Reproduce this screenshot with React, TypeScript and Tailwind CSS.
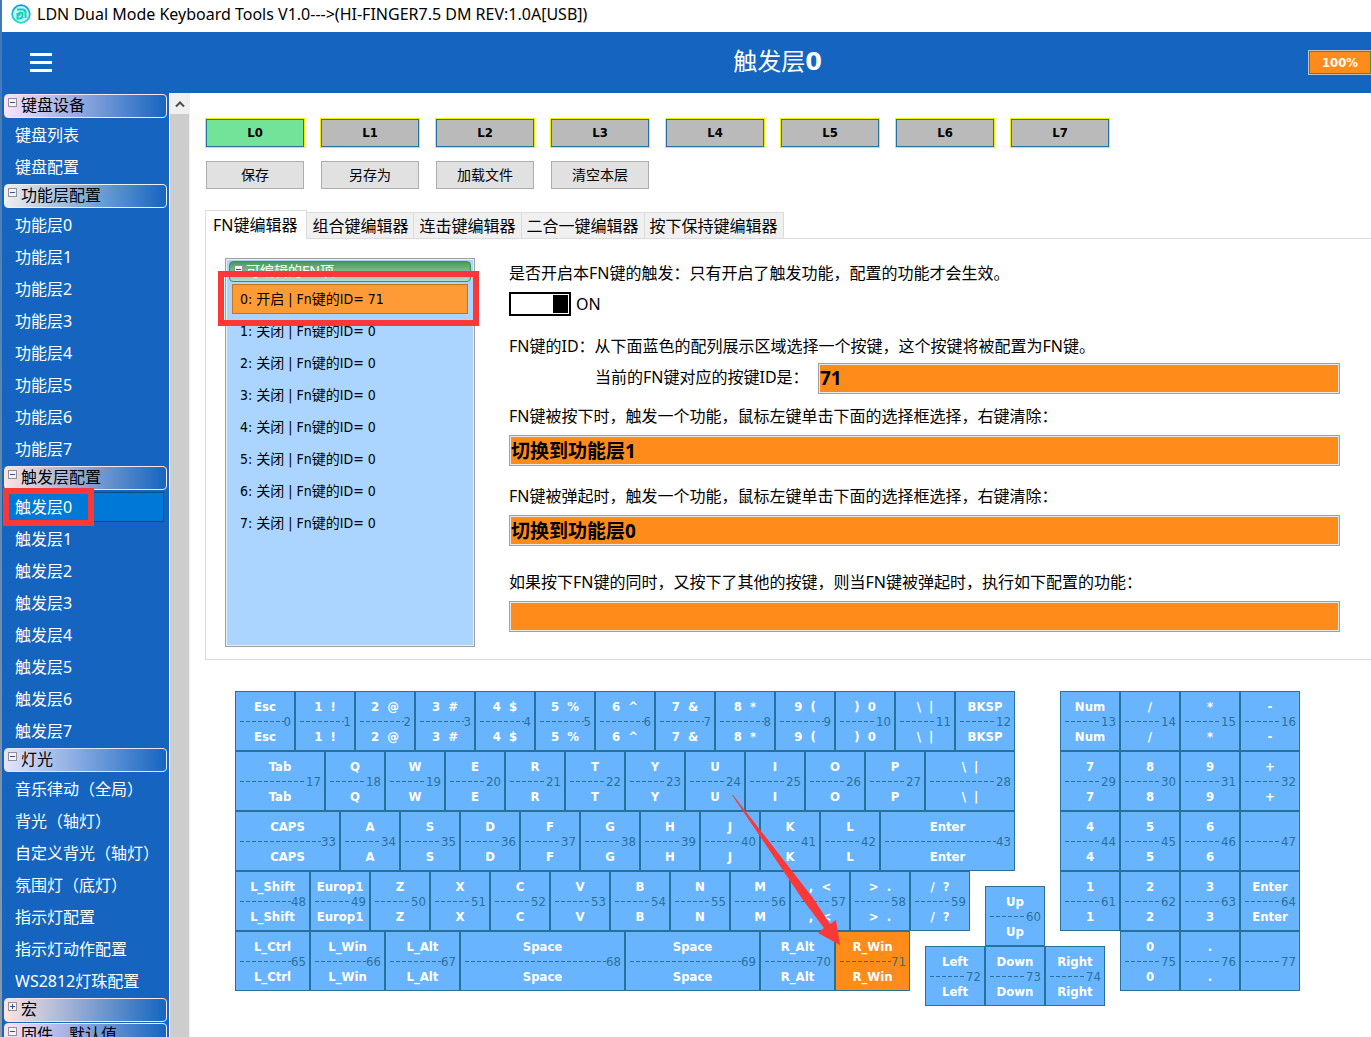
import React, { useState } from 'react';
import { clsx } from 'clsx';

type MenuGroup = {
    title: string;
    tint: string;
    open: boolean;
    items: string[];
};

const menu: MenuGroup[] = [
    {
        title: '键盘设备',
        tint: 'from-[#fde2fb] border-[#fde2fb]',
        open: true,
        items: ['键盘列表', '键盘配置'],
    },
    {
        title: '功能层配置',
        tint: 'from-[#f0f0f0] border-[#f0f0f0]',
        open: true,
        items: ['功能层0', '功能层1', '功能层2', '功能层3', '功能层4', '功能层5', '功能层6', '功能层7'],
    },
    {
        title: '触发层配置',
        tint: 'from-[#fde4e2] border-[#fde4e2]',
        open: true,
        items: ['触发层0', '触发层1', '触发层2', '触发层3', '触发层4', '触发层5', '触发层6', '触发层7'],
    },
    {
        title: '灯光',
        tint: 'from-[#e4e4fd] border-[#e4e4fd]',
        open: true,
        items: [
            '音乐律动（全局）',
            '背光（轴灯）',
            '自定义背光（轴灯）',
            '氛围灯（底灯）',
            '指示灯配置',
            '指示灯动作配置',
            'WS2812灯珠配置',
        ],
    },
    { title: '宏', tint: 'from-[#fde4e2] border-[#fde4e2]', open: false, items: [] },
    { title: '固件、默认值', tint: 'from-[#fde2fb] border-[#fde2fb]', open: true, items: [] },
];

const layers = ['L0', 'L1', 'L2', 'L3', 'L4', 'L5', 'L6', 'L7'];
const actions = ['保存', '另存为', '加载文件', '清空本层'];
const tabs = ['FN键编辑器', '组合键编辑器', '连击键编辑器', '二合一键编辑器', '按下保持键编辑器'];
const fnItems = [71, 0, 0, 0, 0, 0, 0, 0];

// [label, id, width], width in quarter keys
type KeyDef = [string, number, number];
type KeyRow = { x: number; y: number; keys: KeyDef[] };

const keyRows: KeyRow[] = [
    {
        x: 0,
        y: 0,
        keys: [
            ['Esc', 0, 4],
            ['1  !', 1, 4],
            ['2  @', 2, 4],
            ['3  #', 3, 4],
            ['4  $', 4, 4],
            ['5  %', 5, 4],
            ['6  ^', 6, 4],
            ['7  &', 7, 4],
            ['8  *', 8, 4],
            ['9  (', 9, 4],
            [')  0', 10, 4],
            ['\\  |', 11, 4],
            ['BKSP', 12, 4],
        ],
    },
    {
        x: 0,
        y: 4,
        keys: [
            ['Tab', 17, 6],
            ['Q', 18, 4],
            ['W', 19, 4],
            ['E', 20, 4],
            ['R', 21, 4],
            ['T', 22, 4],
            ['Y', 23, 4],
            ['U', 24, 4],
            ['I', 25, 4],
            ['O', 26, 4],
            ['P', 27, 4],
            ['\\  |', 28, 6],
        ],
    },
    {
        x: 0,
        y: 8,
        keys: [
            ['CAPS', 33, 7],
            ['A', 34, 4],
            ['S', 35, 4],
            ['D', 36, 4],
            ['F', 37, 4],
            ['G', 38, 4],
            ['H', 39, 4],
            ['J', 40, 4],
            ['K', 41, 4],
            ['L', 42, 4],
            ['Enter', 43, 9],
        ],
    },
    {
        x: 0,
        y: 12,
        keys: [
            ['L_Shift', 48, 5],
            ['Europ1', 49, 4],
            ['Z', 50, 4],
            ['X', 51, 4],
            ['C', 52, 4],
            ['V', 53, 4],
            ['B', 54, 4],
            ['N', 55, 4],
            ['M', 56, 4],
            [',  <', 57, 4],
            ['>  .', 58, 4],
            ['/  ?', 59, 4],
        ],
    },
    {
        x: 0,
        y: 16,
        keys: [
            ['L_Ctrl', 65, 5],
            ['L_Win', 66, 5],
            ['L_Alt', 67, 5],
            ['Space', 68, 11],
            ['Space', 69, 9],
            ['R_Alt', 70, 5],
            ['R_Win', 71, 5],
        ],
    },
    { x: 50, y: 13, keys: [['Up', 60, 4]] },
    {
        x: 46,
        y: 17,
        keys: [
            ['Left', 72, 4],
            ['Down', 73, 4],
            ['Right', 74, 4],
        ],
    },
    {
        x: 55,
        y: 0,
        keys: [
            ['Num', 13, 4],
            ['/', 14, 4],
            ['*', 15, 4],
            ['-', 16, 4],
        ],
    },
    {
        x: 55,
        y: 4,
        keys: [
            ['7', 29, 4],
            ['8', 30, 4],
            ['9', 31, 4],
            ['+', 32, 4],
        ],
    },
    {
        x: 55,
        y: 8,
        keys: [
            ['4', 44, 4],
            ['5', 45, 4],
            ['6', 46, 4],
            ['', 47, 4],
        ],
    },
    {
        x: 55,
        y: 12,
        keys: [
            ['1', 61, 4],
            ['2', 62, 4],
            ['3', 63, 4],
            ['Enter', 64, 4],
        ],
    },
    {
        x: 59,
        y: 16,
        keys: [
            ['0', 75, 4],
            ['.', 76, 4],
            ['', 77, 4],
        ],
    },
];

function ExpandMark({ open }: { open: boolean }) {
    return (
        <svg className="h-[9px] w-[9px] shrink-0" viewBox="0 0 9 9" shapeRendering="crispEdges" aria-hidden="true">
            <rect x="0.5" y="0.5" width="8" height="8" fill="#f4f4f4" stroke="#919191" />
            <path d={open ? 'M2 4.5h5' : 'M2 4.5h5M4.5 2v5'} stroke="#3a4f9c" />
        </svg>
    );
}

function TitleBar() {
    return (
        <div className="flex h-8 shrink-0 items-center bg-white pb-[5px] pl-[9px]">
            <svg className="h-5 w-5" viewBox="0 0 20 20" aria-hidden="true">
                <defs>
                    <linearGradient id="ring" x1="0" y1="0" x2="0" y2="1">
                        <stop offset="0" stopColor="#1590f0" />
                        <stop offset="1" stopColor="#1fe0cc" />
                    </linearGradient>
                </defs>
                <circle cx="10" cy="10" r="8.8" fill="#c4f4fb" stroke="url(#ring)" strokeWidth="1.8" />
                <path
                    d="M6 5.5h5.500a3 3 0 0 1 3 3v5.500M6.500 9v5.500h2a3 3 0 0 0 3-3V8.800H8.500v3"
                    fill="none"
                    stroke="#0fd3b4"
                    strokeWidth="2"
                />
            </svg>
            <span className="ml-1.5 text-base leading-5">
                LDN Dual Mode Keyboard Tools V1.0---&gt;(HI-FINGER7.5 DM REV:1.0A[USB])
            </span>
        </div>
    );
}

function Header() {
    return (
        <header className="relative flex h-[61px] shrink-0 items-center bg-[#1565c0] text-white">
            <button type="button" aria-label="菜单" className="flex w-[182px] flex-col gap-[5px] pl-7">
                <span className="h-[3px] w-[22px] bg-white" />
                <span className="h-[3px] w-[22px] bg-white" />
                <span className="h-[3px] w-[22px] bg-white" />
            </button>
            <h1 className="flex-1 pb-0.5 text-center text-2xl leading-8">
                触发层<b className="font-['DejaVu_Sans']">0</b>
            </h1>
            <div className="absolute top-[18px] -right-px border border-[#c0c0c0]">
                <div className="h-[23px] w-[62px] border border-[#2c9a3c] bg-[#ff8c1a] text-center font-['DejaVu_Sans_Condensed','DejaVu_Sans'] text-[13px] leading-[21px] font-bold">
                    100%
                </div>
            </div>
        </header>
    );
}

function Sidebar({ current, onSelect }: { current: string; onSelect: (name: string) => void }) {
    return (
        <nav className="w-[167px] shrink-0 overflow-hidden bg-[#1565c0] pt-px">
            {menu.map((group) => (
                <section key={group.title}>
                    <button
                        type="button"
                        className={clsx(
                            'mb-px ml-0.5 flex h-6 w-[163px] items-start gap-1 rounded border bg-linear-to-r/srgb to-[#1565c0] pl-[3px] text-left text-base leading-[21px]',
                            group.tint
                        )}>
                        <span className="pt-[3px]">
                            <ExpandMark open={group.open} />
                        </span>
                        {group.title}
                    </button>
                    {group.items.length > 0 && (
                        <ul className="pb-px text-white">
                            {group.items.map((item) => (
                                <li key={item} className="relative py-px pr-[5px] pl-1">
                                    <button
                                        type="button"
                                        onClick={() => onSelect(item)}
                                        className={clsx(
                                            'block h-[30px] w-full border pl-2 text-left text-base leading-7 whitespace-nowrap',
                                            item === current ? 'border-[#0a4a86] bg-[#0078d7]' : 'border-transparent'
                                        )}>
                                        {item}
                                    </button>
                                    {item === '触发层0' && (
                                        <span className="pointer-events-none absolute -top-[3px] left-px h-[38px] w-[91px] border-[6px] border-[#fb3838]" />
                                    )}
                                </li>
                            ))}
                        </ul>
                    )}
                </section>
            ))}
        </nav>
    );
}

function FnList() {
    const [picked, setPicked] = useState(0);
    return (
        <div className="relative h-[389px] w-[250px] shrink-0 border border-[#a0a0a0] bg-[#abd5ff] p-0.5 inset-ring inset-ring-[#e8eef4]">
            <div className="mx-px flex h-[21px] items-start gap-[3px] rounded border border-[#3f8f4f] bg-linear-to-b/srgb from-[#4c9a56] to-[#b4dcd4] pl-1 text-sm leading-[17px] text-white">
                <span className="pt-[3px]">
                    <ExpandMark open />
                </span>
                可编辑的FN项
            </div>
            <ul className="px-1 pt-px font-['DejaVu_Sans_Condensed','DejaVu_Sans','Noto_Sans_CJK_SC',sans-serif] text-sm">
                {fnItems.map((id, i) => (
                    <li key={i} className="py-px">
                        <button
                            type="button"
                            onClick={() => setPicked(i)}
                            className={clsx(
                                'block h-[30px] w-full border pl-[7px] text-left leading-7',
                                picked === i ? 'border-[#c8741a] bg-[#ff9b36]' : 'border-transparent'
                            )}>
                            {i}: {id ? '开启' : '关闭'} | Fn键的ID= {id}
                        </button>
                    </li>
                ))}
            </ul>
            <span className="pointer-events-none absolute top-3 -left-2 h-[55px] w-[261px] border-[6px] border-[#fb3838]" />
        </div>
    );
}

function OrangeInput({ id, value }: { id: string; value: string }) {
    return (
        <input
            id={id}
            readOnly
            defaultValue={value}
            className="h-[31px] w-full min-w-0 flex-1 border border-[#a0a0a0] bg-[#ff8c1a] pb-0.5 pl-px text-[19px] leading-7 font-bold inset-ring inset-ring-[#e8e8e8]"
        />
    );
}

function FnForm() {
    const [on, setOn] = useState(true);
    return (
        <form className="flex-1 text-base leading-6">
            <p className="pt-[3px]">是否开启本FN键的触发：只有开启了触发功能，配置的功能才会生效。</p>
            <label className="mt-[7px] flex h-6 items-center gap-[5px]">
                <input type="checkbox" checked={on} onChange={() => setOn(!on)} className="peer sr-only" />
                <span className="flex h-6 w-[62px] border-2 border-black p-px peer-checked:justify-end">
                    <span className="h-[18px] w-[15px] bg-black" />
                </span>
                {on ? 'ON' : 'OFF'}
            </label>
            <p className="mt-[18px]">FN键的ID：从下面蓝色的配列展示区域选择一个按键，这个按键将被配置为FN键。</p>
            <div className="mt-[5px] flex items-start pl-[86px]">
                <label htmlFor="fn-id" className="w-[223px] pt-0.5">
                    当前的FN键对应的按键ID是：
                </label>
                <OrangeInput id="fn-id" value="71" />
            </div>
            <label htmlFor="fn-down" className="mt-[10px] block">
                FN键被按下时，触发一个功能，鼠标左键单击下面的选择框选择，右键清除：
            </label>
            <div className="mt-[7px] flex">
                <OrangeInput id="fn-down" value="切换到功能层1" />
            </div>
            <label htmlFor="fn-up" className="mt-[18px] block">
                FN键被弹起时，触发一个功能，鼠标左键单击下面的选择框选择，右键清除：
            </label>
            <div className="mt-[7px] flex">
                <OrangeInput id="fn-up" value="切换到功能层0" />
            </div>
            <label htmlFor="fn-combo" className="mt-6 block">
                如果按下FN键的同时，又按下了其他的按键，则当FN键被弹起时，执行如下配置的功能：
            </label>
            <div className="mt-[7px] flex">
                <OrangeInput id="fn-combo" value="" />
            </div>
        </form>
    );
}

function KeyCap({ label, id, active }: { label: string; id: number; active: boolean }) {
    return (
        <span
            className={clsx(
                'flex h-full flex-col justify-center border border-[#27729b] text-[13px] leading-[15px] text-white',
                active ? 'bg-[#ff8c1a]' : 'bg-[#69b4ff]'
            )}>
            <b className="h-[15px] text-center whitespace-pre">{label}</b>
            <span className="flex items-center pr-[3px] pl-1 text-[#27729b]">
                <span className="h-px flex-1 bg-[repeating-linear-gradient(90deg,#27729b_0_4px,transparent_4px_6px)]" />
                {id}
            </span>
            <b className="h-[15px] text-center whitespace-pre">{label}</b>
        </span>
    );
}

function Keyboard() {
    const [active, setActive] = useState(71);
    return (
        <div className="relative mt-[31px] ml-[30px] grid w-max grid-cols-[repeat(71,15px)] grid-rows-[repeat(21,15px)] font-['DejaVu_Sans_Condensed','DejaVu_Sans',sans-serif]">
            {keyRows.map((row) => {
                let x = row.x + 1;
                return row.keys.map(([label, id, width]) => {
                    const start = x;
                    x += width;
                    return (
                        <button
                            key={id}
                            type="button"
                            onClick={() => setActive(id)}
                            style={{ gridColumn: `${start} / span ${width}`, gridRow: `${row.y + 1} / span 4` }}>
                            <KeyCap label={label} id={id} active={active === id} />
                        </button>
                    );
                });
            })}
            <svg
                className="pointer-events-none absolute top-[104px] left-[497px] h-[151px] w-[109px]"
                viewBox="0 0 109 151"
                aria-hidden="true">
                <path d="M0 0 L1 0 L81 103 L98 129 L104 125 L108 150 L86 138 L92 133 L71 105 Z" fill="#fb3838" />
            </svg>
        </div>
    );
}

export default function App() {
    const [current, setCurrent] = useState('触发层0');
    const [layer, setLayer] = useState('L0');
    const [tab, setTab] = useState(tabs[0]);

    return (
        <div className="flex h-screen overflow-hidden bg-white font-['Noto_Sans','Noto_Sans_CJK_SC',sans-serif] text-black">
            <div className="w-0.5 shrink-0 bg-linear-to-b from-[#3f78b4] to-[#8d9aa5]" />
            <div className="flex min-w-0 flex-1 flex-col">
                <TitleBar />
                <Header />
                <div className="flex min-h-0 flex-1">
                    <Sidebar current={current} onSelect={setCurrent} />
                    <div className="flex w-[21px] shrink-0 flex-col border-r border-l border-r-[#f0f0f0] border-l-white bg-[#cdcdcd]">
                        <button type="button" aria-label="向上滚动" className="flex h-[21px] items-center justify-center bg-[#f0f0f0]">
                            <svg className="h-2 w-2.5" viewBox="0 0 10 8" aria-hidden="true">
                                <path d="M1 6.500L5 2.500L9 6.500" fill="none" stroke="#505050" strokeWidth="2" />
                            </svg>
                        </button>
                    </div>
                    <main className="min-w-0 flex-1 pt-[25px] pl-[15px]">
                        <div className="flex gap-[15px]">
                            {layers.map((name) => (
                                <button
                                    key={name}
                                    type="button"
                                    onClick={() => setLayer(name)}
                                    className={clsx(
                                        "h-[30px] w-[100px] border border-[#eeee00] font-['DejaVu_Sans_Condensed','DejaVu_Sans'] text-[13px] leading-7 font-bold inset-ring inset-ring-[#27729b]",
                                        name === layer ? 'bg-[#74e39a]' : 'bg-[#bababa]'
                                    )}>
                                    {name}
                                </button>
                            ))}
                        </div>
                        <div className="mt-[13px] ml-px flex gap-[17px]">
                            {actions.map((name) => (
                                <button
                                    key={name}
                                    type="button"
                                    className="h-7 w-[98px] border border-[#adadad] bg-[#e1e1e1] text-sm leading-6">
                                    {name}
                                </button>
                            ))}
                        </div>
                        <div role="tablist" className="mt-[21px] flex h-[29px] items-end text-base">
                            {tabs.map((name) => (
                                <button
                                    key={name}
                                    type="button"
                                    role="tab"
                                    aria-selected={name === tab}
                                    onClick={() => setTab(name)}
                                    className={clsx(
                                        'border-[#dcdcdc] leading-6 whitespace-nowrap',
                                        name === tab
                                            ? 'h-[29px] border-t border-r border-l pr-[9px] pb-px pl-[7px]'
                                            : 'h-[27px] border-t border-r border-b bg-[#f0f0f0] px-[5px]'
                                    )}>
                                    {name}
                                </button>
                            ))}
                            <span className="h-px flex-1 bg-[#dcdcdc]" />
                        </div>
                        <section className="flex h-[421px] gap-[34px] border-b border-l border-[#dcdcdc] pt-[19px] pr-[31px] pl-[19px]">
                            <FnList />
                            <FnForm />
                        </section>
                        <Keyboard />
                    </main>
                </div>
            </div>
        </div>
    );
}
